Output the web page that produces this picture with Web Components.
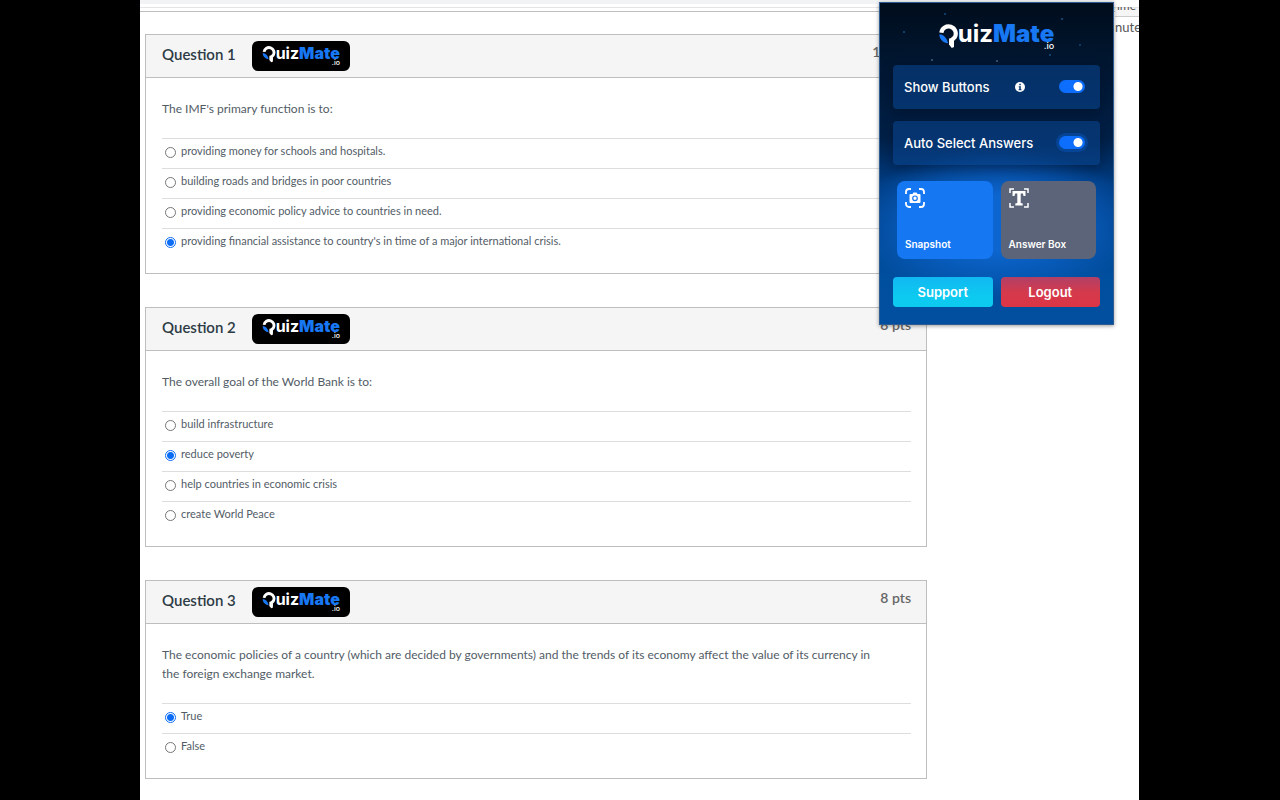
<!DOCTYPE html>
<html lang="en">
<head>
<meta charset="utf-8">
<title>Quiz</title>
<style>
  html { background: #000; }
  body { margin: 0; font-family: Lato, sans-serif; color: #525c66; }
</style>
</head>
<body>
<quiz-page>
  <quiz-question number="1" points="10" picked="3" options="providing money for schools and hospitals.|building roads and bridges in poor countries|providing economic policy advice to countries in need.|providing financial assistance to country's in time of a major international crisis.">The IMF's primary function is to:</quiz-question>
  <quiz-question number="2" points="8" picked="1" options="build infrastructure|reduce poverty|help countries in economic crisis|create World Peace">The overall goal of the World Bank is to:</quiz-question>
  <quiz-question number="3" points="8" picked="0" options="True|False">The economic policies of a country (which are decided by governments) and the trends of its economy affect the value of its currency in the foreign exchange market.</quiz-question>
  <quiz-timer slot="side"></quiz-timer>
  <mate-popup slot="popup"></mate-popup>
</quiz-page>

<script>
const define = (name, html, setup) => customElements.define(name, class extends HTMLElement {
  connectedCallback() {
    if (this.shadowRoot) return;
    const t = document.createElement('template');
    t.innerHTML = html;
    this.attachShadow({ mode: 'open' }).append(t.content.cloneNode(true));
    if (setup) setup(this, this.shadowRoot);
  }
});

define('mate-logo', `
<style>
  :host { display: inline-flex; flex-direction: column; align-items: flex-end; color: #fff; font: 700 16px/14px Inter, sans-serif; }
  .name { display: flex; align-items: flex-start; }
  svg { width: 14px; height: 17px; flex: none; margin-bottom: -3px; }
  b { color: #1877f2; }
  small { font: 500 7px/6px Inter, sans-serif; }
  :host([large]) { font-size: 24px; line-height: 20px; }
  :host([large]) svg { width: 19px; height: 25px; margin-bottom: -5px; }
  :host([large]) small { font-size: 9px; line-height: 8px; margin-top: -2px; }
</style>
<span class="name"><svg viewBox="0 0 20 26" aria-hidden="true">
  <path d="M2.500 9A7.600 7.600 0 1 1 16.600 13.800L13.600 16.600V22" fill="none" stroke="#fff" stroke-width="4.400"/>
  <path d="M10.600 15h5.200v9l-2.400 1-2.800-3.600z" fill="#fff"/>
  <path d="M.4 10.600C4.800 11 8.400 14.500 9.600 20.200 4.500 19.800.300 16 .4 10.600z" fill="#1877f2"/>
</svg><span>uiz<b>Mate</b></span></span><small>.io</small>`);

define('quiz-question', `
<style>
  :host { display: block; border: 1px solid #bcbec0; background: #fff; }
  header { display: flex; align-items: center; height: 42px; box-sizing: border-box; padding: 0 15px 0 16px; background: #f5f5f5; }
  h2 { margin: 0 16px 4px 0; font: 600 15px/20px Lato, sans-serif; color: #2d3b45; }
  button { display: flex; align-items: center; justify-content: center; width: 98px; height: 30px; padding: 0; border: 0; border-radius: 6px; background: #000; }
  .pts { margin: 0 0 8px auto; font: 600 14px/18px Lato, sans-serif; color: #666; }
  fieldset { border: 0; border-top: 1px solid #bcbec0; margin: 0; padding: 21px 15px 15px 16px; min-width: 0; }
  p { margin: 0 0 20px; padding-right: 30px; font-size: 12px; line-height: 19px; }
  label { display: flex; align-items: center; height: 30px; box-sizing: border-box; border-top: 1px solid #ddd; padding: 0 0 2px 3px; font-size: 11px; line-height: 16px; }
  label span { margin-bottom: 3px; }
  input { appearance: none; box-sizing: border-box; width: 11px; height: 11px; margin: 0 5px 0 0; border: 1px solid #767676; border-radius: 50%; background: #fff; }
  input:checked { border-color: #0b6cf5; background: radial-gradient(circle, #0b6cf5 0 3px, #fff 4px); }
</style>
<header><h2></h2><button type="button" aria-label="QuizMate.io"><mate-logo></mate-logo></button><span class="pts"></span></header>
<fieldset aria-labelledby="q"><p id="q"><slot></slot></p></fieldset>`,
(host, root) => {
  root.querySelector('h2').textContent = 'Question ' + host.getAttribute('number');
  root.querySelector('.pts').textContent = host.getAttribute('points') + ' pts';
  host.getAttribute('options').split('|').forEach((text, i) => {
    const label = document.createElement('label');
    const input = document.createElement('input');
    const span = document.createElement('span');
    input.type = 'radio';
    input.name = 'answer';
    input.checked = i === Number(host.getAttribute('picked'));
    span.textContent = text;
    label.append(input, span);
    root.querySelector('fieldset').append(label);
  });
});

define('quiz-timer', `
<style>
  :host { display: block; font-size: 13px; line-height: 20px; white-space: nowrap; color: #555; }
  .head { display: flex; justify-content: flex-end; height: 17px; box-sizing: border-box; border-bottom: 1px solid #ccc; background: linear-gradient(#fff 7px, #e4e4e4 7px 8px, #f5f5f5 8px); }
  .cut { margin-right: 3px; font-size: 12px; line-height: 12px; clip-path: inset(7px 0 0); }
</style>
<div class="head"><div class="cut">Time</div></div><div class="left">nute</div>`);

define('mate-switch', `
<style>
  :host { display: block; }
  label { display: flex; align-items: center; height: 44px; box-sizing: border-box; padding: 0 15px 1px 11px; border-radius: 4px; background: rgba(8, 66, 140, .6); box-shadow: 0 3px 12px rgba(0, 10, 30, .35); color: #fff; font: 500 13px/20px Inter, sans-serif; }
  svg { width: 10px; height: 10px; margin-left: 25px; }
  :host(:not([info])) svg { display: none; }
  input { appearance: none; width: 26px; height: 13px; margin: 0 0 0 auto; border-radius: 7px; background: radial-gradient(circle at 19px 50%, #fff 4px, transparent 5px) #0d6efd; }
  :host([ring]) input { box-shadow: 0 0 0 3px rgba(13, 110, 253, .25); }
</style>
<label><slot></slot><svg viewBox="0 0 10 10" aria-hidden="true"><circle cx="5" cy="5" r="5" fill="#fff"/><path d="M4.300 1.800h1.500v1.500H4.300zM3.700 4.200h2.100v3h.7v1H3.600v-1h.7v-2h-.6z" fill="#04316a"/></svg><input type="checkbox" role="switch" checked></label>`);

define('mate-tile', `
<style>
  :host { display: block; }
  button { display: flex; flex-direction: column; align-items: flex-start; justify-content: space-between; width: 100%; height: 78px; box-sizing: border-box; padding: 7px 8px 8px; border: 0; border-radius: 8px; background: var(--fill); color: #fff; font: 600 10px/14px Inter, sans-serif; }
  ::slotted(svg) { width: 20px; height: 20px; }
</style>
<button type="button"><slot name="icon"></slot><slot></slot></button>`);

define('mate-popup', `
<style>
  :host { display: block; box-sizing: border-box; width: 235px; padding: 21px 13px 17px; border: 1px solid #2d5c92; box-shadow: 0 1px 4px rgba(0, 0, 0, .4);
    background:
      radial-gradient(circle at 24px 29px, #12416b 0 1px, transparent 1px),
      radial-gradient(circle at 65px 11px, #0c3a64 0 1px, transparent 1px),
      radial-gradient(circle at 52px 57px, #35506a 0 1px, transparent 1px),
      radial-gradient(circle at 117px 58px, #35506a 0 1px, transparent 1px),
      radial-gradient(circle at 170px 52px, #12416b 0 1px, transparent 1px),
      radial-gradient(circle at 182px 16px, #12416b 0 1px, transparent 1px),
      radial-gradient(circle at 200px 42px, #0c3a64 0 1px, transparent 1px),
      radial-gradient(ellipse 145px 75px at 50% 220px, #0d66d0 35%, rgba(8, 82, 175, 0)),
      linear-gradient(#000d1c, #011630 18%, #012047 42%, #003b80 56%, #004e9e 85%, #024f9f); }
  .brand { display: flex; justify-content: center; align-items: flex-start; height: 41px; }
  .rows { display: grid; gap: 12px; }
  .tiles { display: grid; grid-template-columns: 1fr 1fr; gap: 8px; padding: 16px 4px 18px; }
  .actions { display: grid; grid-template-columns: 1fr 1fr; gap: 8px; }
  .actions button { height: 30px; padding: 0 0 1px; border: 0; border-radius: 4px; color: #fff; font: 600 13px/20px Inter, sans-serif; }
  .support { background: linear-gradient(#11b8f2, #0dcaf0 65%); }
  .logout { background: linear-gradient(#b04068, #d43a4c 50%, #dc3545); }
</style>
<div class="brand"><mate-logo large></mate-logo></div>
<div class="rows"><mate-switch info>Show Buttons</mate-switch><mate-switch ring>Auto Select Answers</mate-switch></div>
<div class="tiles">
  <mate-tile style="--fill:#1677f3"><svg slot="icon" viewBox="0 0 20 20" fill="none" stroke="#fff" stroke-width="1.800" aria-hidden="true"><path d="M1 6V4a3 3 0 0 1 3-3h2M14 1h2a3 3 0 0 1 3 3v2M19 14v2a3 3 0 0 1-3 3h-2M6 19H4a3 3 0 0 1-3-3v-2"/><path d="M5.500 6h2l1-1.500h3l1 1.500h2q1 0 1 1v7q0 1-1 1h-9q-1 0-1-1V7q0-1 1-1z" fill="#fff" stroke="none"/><circle cx="10" cy="10.300" r="2.300" stroke="#1677f3" stroke-width="1.200"/></svg>Snapshot</mate-tile>
  <mate-tile style="--fill:#5b6478"><svg slot="icon" viewBox="0 0 20 20" fill="none" stroke="#fff" stroke-width="1.500" aria-hidden="true"><path d="M1 5V1h4M15 1h4v4M19 15v4h-4M5 19H1v-4"/><path d="M3.500 3h13v5h-2l-.6-2.400h-2.200v9.400l2 .5V17.500H6.300v-2l2-.5V5.600H6.100L5.500 8h-2z" fill="#fff" stroke="none"/></svg>Answer Box</mate-tile>
</div>
<div class="actions"><button type="button" class="support">Support</button><button type="button" class="logout">Logout</button></div>`);

define('quiz-page', `
<style>
  :host { display: block; position: relative; box-sizing: border-box; min-height: 100vh; margin: 0 141px 0 140px; background: #fff; overflow: hidden; }
  .bar { height: 12px; box-sizing: border-box; border-bottom: 1px solid #bcbec0; background: linear-gradient(#f1f3f5 4px, #fff 4px 7px, #e4e4e4 7px 8px, #fff 8px); }
  .cols { display: grid; grid-template-columns: minmax(0, 1fr) 24px; column-gap: 188px; padding-left: 5px; }
  main { display: grid; gap: 33px; padding: 22px 0 21px; }
  .side { margin-top: -12px; }
  .popup { position: absolute; top: 2px; right: 25px; }
</style>
<div class="bar"></div>
<div class="cols"><main><slot></slot></main><aside class="side"><slot name="side"></slot></aside></div>
<div class="popup"><slot name="popup"></slot></div>`);
</script>
</body>
</html>
